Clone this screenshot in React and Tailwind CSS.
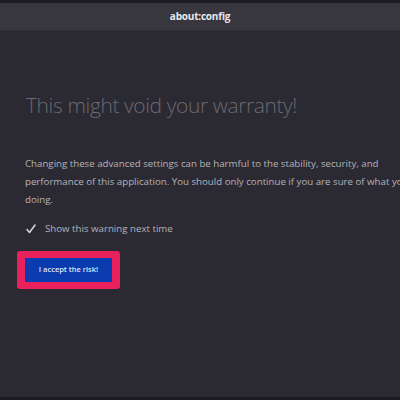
export default function App() {
  return (
    <div className="w-[400px] h-[400px] overflow-hidden bg-[#2b2a33] flex flex-col" style={{ fontFamily: '"Open Sans", "Noto Sans", sans-serif' }}>
      <div className="h-[3px] bg-[#1c1b22] shrink-0" />
      <div className="h-[28px] shrink-0 bg-[#38373f] flex items-center justify-center border-b border-[#323138]">
        <span className="text-[10px] font-bold text-[#e8e8ec] tracking-[-0.2px]">about:config</span>
      </div>
      <div className="flex-1 pl-[25px] pt-[59px] overflow-hidden">
        <h1 className="text-[21px] leading-[30px] font-light text-[#6a6971] whitespace-nowrap ml-[1px] tracking-[-0.4px]">This might void your warranty!</h1>
        <p className="mt-[35px] text-[9.7px] leading-[18px] text-[#b4b3ba] whitespace-nowrap">
          Changing these advanced settings can be harmful to the stability, security, and<br />
          performance of this application. You should only continue if you are sure of what you<br />
          doing.
        </p>
        <div className="mt-[12px] flex items-center gap-[8px] h-[16px]">
          <div className="w-[12px] h-[12px] flex items-center justify-center">
            <svg width="12" height="12" viewBox="0 0 12 12" fill="none">
              <path d="M2 6.5 L4.5 9.5 L10 2" stroke="#d8d8dc" strokeWidth="1.5" strokeLinecap="round" strokeLinejoin="round" />
            </svg>
          </div>
          <span className="text-[9.7px] text-[#b4b3ba] whitespace-nowrap">Show this warning next time</span>
        </div>
        <div className="mt-[14px] -ml-[8px] inline-flex px-[8px] py-[7px] bg-[#e8215c] rounded-[3px]">
          <div className="w-[87px] h-[24px] bg-[#0a3cb0] flex items-center justify-center">
            <span className="text-[7.5px] font-semibold text-[#dfe4f5] whitespace-nowrap">I accept the risk!</span>
          </div>
        </div>
      </div>
      <div className="h-[3px] bg-[#1c1b22] shrink-0" />
    </div>
  );
}
